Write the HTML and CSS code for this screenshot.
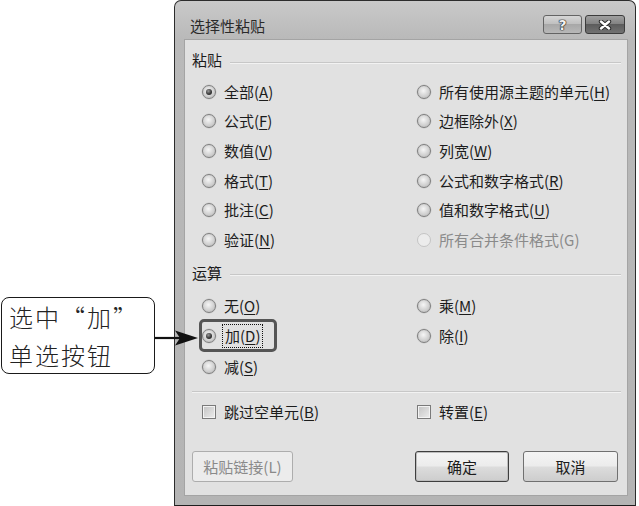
FILE: index.html
```html
<!DOCTYPE html>
<html lang="zh-CN">
<head>
<meta charset="utf-8">
<title>选择性粘贴</title>
<link rel="stylesheet" href="styles.css">
</head>
<body>
<div class="stage">
  <div class="window">
    <div class="titlebar">
      <span class="title">选择性粘贴</span>
      <div class="tbtns">
        <span class="tb help">?</span>
        <span class="tb close"><svg width="14" height="10" viewBox="0 0 14 10"><path d="M3 1.5 L11 8.5 M11 1.5 L3 8.5" stroke="#2a2a2a" stroke-width="4.4" stroke-linecap="round"/><path d="M3 1.5 L11 8.5 M11 1.5 L3 8.5" stroke="#ffffff" stroke-width="2.4" stroke-linecap="round"/></svg></span>
      </div>
    </div>
    <div class="client">
      <div class="ghead"><span>粘贴</span><i></i></div>
      <div class="grid paste">
        <label class="opt"><span class="radio on"></span><span>全部(<u>A</u>)</span></label>
        <label class="opt"><span class="radio"></span><span>所有使用源主题的单元(<u>H</u>)</span></label>
        <label class="opt"><span class="radio"></span><span>公式(<u>F</u>)</span></label>
        <label class="opt"><span class="radio"></span><span>边框除外(<u>X</u>)</span></label>
        <label class="opt"><span class="radio"></span><span>数值(<u>V</u>)</span></label>
        <label class="opt"><span class="radio"></span><span>列宽(<u>W</u>)</span></label>
        <label class="opt"><span class="radio"></span><span>格式(<u>T</u>)</span></label>
        <label class="opt"><span class="radio"></span><span>公式和数字格式(<u>R</u>)</span></label>
        <label class="opt"><span class="radio"></span><span>批注(<u>C</u>)</span></label>
        <label class="opt"><span class="radio"></span><span>值和数字格式(<u>U</u>)</span></label>
        <label class="opt"><span class="radio"></span><span>验证(<u>N</u>)</span></label>
        <label class="opt disabled"><span class="radio"></span><span>所有合并条件格式(G)</span></label>
      </div>
      <div class="ghead op"><span>运算</span><i></i></div>
      <div class="grid ops">
        <label class="opt"><span class="radio"></span><span>无(<u>O</u>)</span></label>
        <label class="opt"><span class="radio"></span><span>乘(<u>M</u>)</span></label>
        <label class="opt"><span class="radio on"></span><span class="focus">加(<u>D</u>)</span></label>
        <label class="opt"><span class="radio"></span><span>除(<u>I</u>)</span></label>
        <label class="opt"><span class="radio"></span><span>减(<u>S</u>)</span></label>
      </div>
      <div class="sep"></div>
      <div class="grid checks">
        <label class="opt"><span class="check"></span><span>跳过空单元(<u>B</u>)</span></label>
        <label class="opt"><span class="check"></span><span>转置(<u>E</u>)</span></label>
      </div>
      <div class="btnrow">
        <span class="btn dis">粘贴链接(L)</span>
        <span class="btn def">确定</span>
        <span class="btn">取消</span>
      </div>
    </div>
  </div>
  <div class="hl"></div>
  <div class="callout">选中“加”<br>单选按钮</div>
  <svg class="arrow" width="46" height="18" viewBox="0 0 46 18"><path d="M0 9 H30" stroke="#111" stroke-width="2.2"/><path d="M20 1.5 L43 9 L20 16.5 L25 9 Z" fill="#111"/></svg>
</div>
</body>
</html>
```

FILE: styles.css
```css
* { box-sizing: border-box; }
html, body { margin: 0; padding: 0; background: #ffffff; }
body {
  font-family: "Noto Sans CJK SC", "Noto Sans", sans-serif;
  color: #1c1c1c;
}
.stage {
  position: relative;
  width: 639px;
  height: 506px;
  overflow: hidden;
  display: flex;
}
.window {
  margin-left: 174px;
  width: 462px;
  height: 506px;
  border: 1px solid #2c2c2c;
  border-bottom-color: #1e1e1e;
  border-radius: 7px 7px 0 0;
  background: linear-gradient(#c9c9c9 0, #b9b9b9 38px, #b4b4b4 100%);
  padding: 0 7px 9px 9px;
  display: flex;
  flex-direction: column;
}
.titlebar {
  height: 38px;
  flex: none;
  display: flex;
  justify-content: space-between;
  align-items: flex-start;
  padding: 14px 3px 0 6px;
}
.title {
  font-size: 15px;
  line-height: 20px;
  margin-top: 1px;
  color: #2a2a2a;
}
.tbtns { display: flex; gap: 3px; }
.tb {
  height: 19px;
  border: 1px solid #646464;
  border-radius: 3px;
  display: flex;
  align-items: center;
  justify-content: center;
}
.help {
  width: 39px;
  background: linear-gradient(#d6d6d6, #bebebe 50%, #a8a8a8 50%, #b8b8b8);
  font-family: "DejaVu Sans", sans-serif;
  font-weight: bold;
  font-size: 14px;
  color: #f2f2f2;
  text-shadow: 0 0 1px #222, 0 0 1px #222, 0 0 1px #222, 0 0 1px #222;
}
.close {
  width: 40px;
  background: linear-gradient(#a0a0a0, #808080 50%, #5c5c5c 50%, #727272);
  border-color: #3c3c3c;
}
.client {
  flex: 1;
  background: #e1e1e1;
  border: 1px solid #a4a4a4;
  padding: 0 6px 0 7px;
  font-size: 15px;
}
.ghead {
  display: flex;
  align-items: center;
  height: 20px;
  margin-top: 10px;
  line-height: 20px;
}
.ghead i {
  flex: 1;
  height: 1px;
  background: #c7c7c7;
  box-shadow: 0 1px 0 #f2f2f2;
  margin-left: 8px;
  margin-top: 4px;
}
.ghead.op { margin-top: 8px; }
.grid {
  display: grid;
  grid-template-columns: 215px 1fr;
  padding-left: 10px;
}
.paste { margin-top: 7px; grid-auto-rows: 29.6px; }
.ops { margin-top: 8px; grid-auto-rows: 30.5px; }
.checks { margin-top: 8px; grid-auto-rows: 24px; }
.opt {
  display: flex;
  align-items: center;
  gap: 8px;
  white-space: nowrap;
  line-height: 20px;
}
.opt u { text-underline-offset: 2px; }
.opt.disabled { color: #8a8a8a; }
.radio {
  width: 14px;
  height: 14px;
  border-radius: 50%;
  border: 1px solid #7e7e7e;
  background: radial-gradient(circle at 45% 40%, #f6f6f6 0, #d8d8d8 45%, #b4b4b4 100%);
  box-shadow: 0 0 0 0.5px #c8c8c8;
  flex: none;
  position: relative;
}
.radio.on::after {
  content: "";
  position: absolute;
  left: 3px;
  top: 3px;
  width: 6px;
  height: 6px;
  border-radius: 50%;
  background: radial-gradient(circle at 40% 35%, #9a9a9a 0, #3a3a3a 55%, #1a1a1a 100%);
}
.disabled .radio { border-color: #c4c4c4; background: #ececec; box-shadow: none; }
.focus {
  outline: 1px dotted #111;
  outline-offset: 1px;
  padding: 0 1px;
}
.sep {
  height: 1px;
  background: #c7c7c7;
  box-shadow: 0 1px 0 #f2f2f2;
  margin: 9px 0 0 0;
}
.check {
  width: 14px;
  height: 14px;
  border: 1px solid #7a7a7a;
  background: linear-gradient(135deg, #c2c2c2, #ededed);
  box-shadow: inset 0 0 0 1px #f3f3f3;
  flex: none;
}
.btnrow {
  display: flex;
  margin-top: 27px;
  padding-right: 3px;
}
.btn {
  height: 31px;
  width: 95px;
  border: 1px solid #707070;
  border-radius: 3px;
  background: linear-gradient(#f4f4f4, #ececec 48%, #dcdcdc 52%, #cdcdcd);
  display: flex;
  align-items: center;
  justify-content: center;
  font-size: 15px;
  margin-left: 14px;
}
.btn.dis {
  width: 101px;
  margin-left: 0;
  margin-right: auto;
  border-color: #adadad;
  background: #ececec;
  color: #8a8a8a;
}
.btn.def {
  width: 94px;
  border-color: #3e3e3e;
  box-shadow: inset 0 0 0 1px #bdbdbd;
}
.hl {
  position: absolute;
  left: 199px;
  top: 319px;
  width: 78px;
  height: 33px;
  border: 3px solid #555555;
  border-radius: 5px;
}
.callout {
  position: absolute;
  left: 1px;
  top: 297px;
  width: 154px;
  height: 77px;
  border: 1.5px solid #1a1a1a;
  border-radius: 8px;
  background: #ffffff;
  padding: 0 0 0 7px;
  font-size: 24px;
  line-height: 38px;
  letter-spacing: 2px;
  font-weight: 300;
  color: #222;
}
.arrow {
  position: absolute;
  left: 155px;
  top: 329px;
}
```
